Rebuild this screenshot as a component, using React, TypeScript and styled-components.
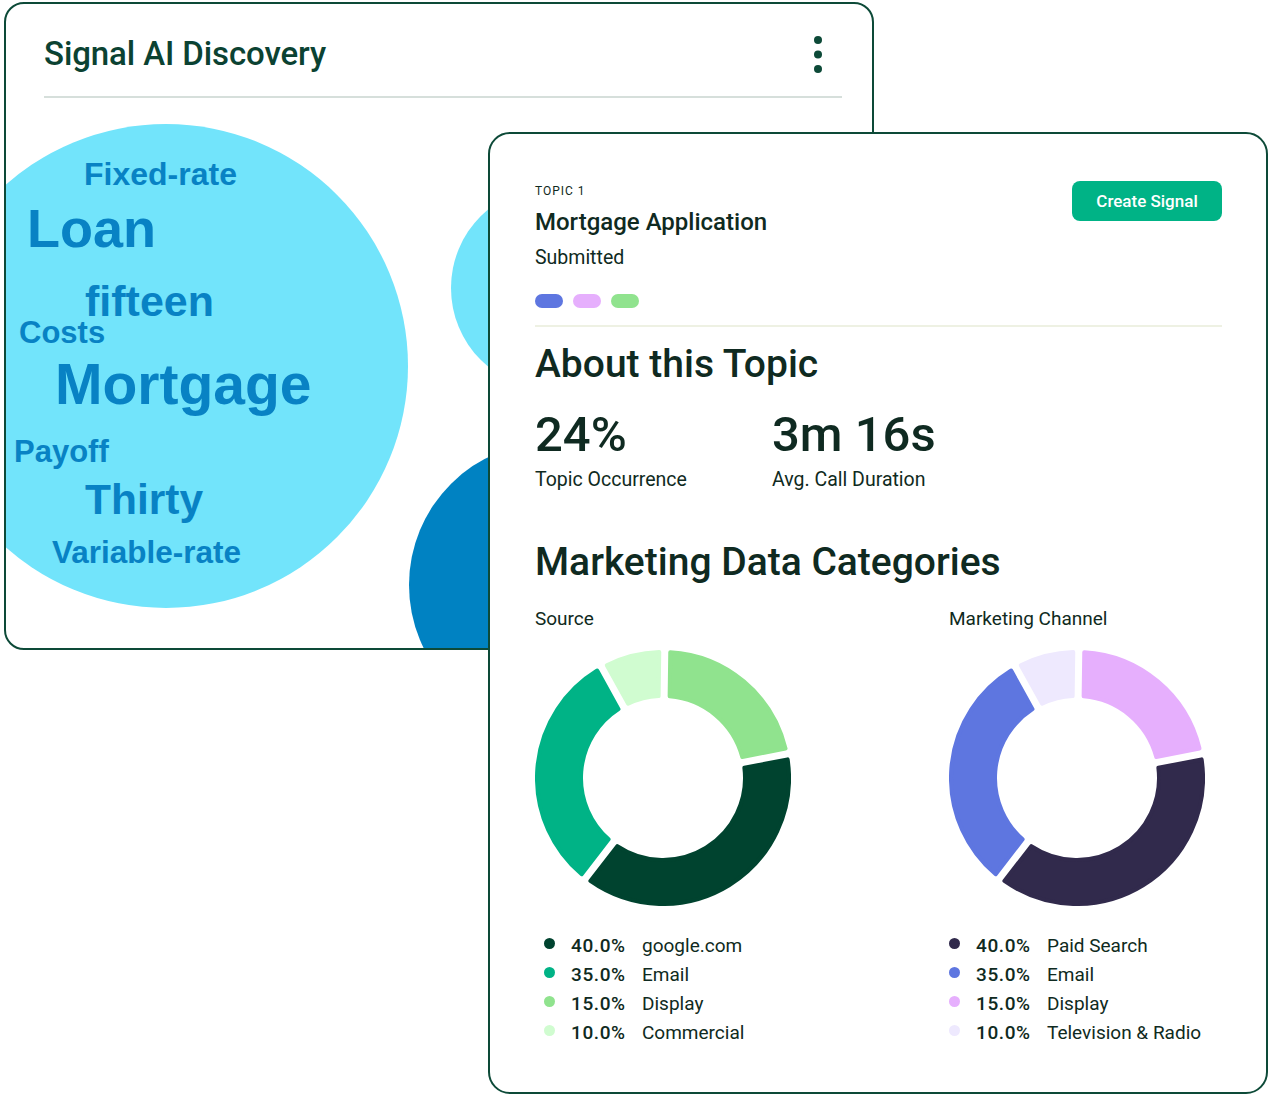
import React from 'react'
import styled, {createGlobalStyle} from 'styled-components'

const INK = '#0f2a21'
const FOREST = '#0d4a38'
const WORD_BLUE = '#0882c4'

const GlobalStyle = createGlobalStyle`
    body {
        margin: 0;
        background: #fff;
    }
`

const Stage = styled.div`
    display: grid;
    width: 1270px;
    font-family: Roboto, "Liberation Sans", sans-serif;
    color: ${INK};
`

/* ---------- discovery card (back) ---------- */

const DiscoveryCard = styled.section`
    grid-area: 1 / 1;
    align-self: start;
    justify-self: start;
    position: relative;
    z-index: 0;
    margin: 2px 0 0 4px;
    width: 870px;
    height: 648px;
    box-sizing: border-box;
    border: 2px solid ${FOREST};
    border-radius: 20px;
    background: #fff;
    overflow: hidden;
    display: flex;
    flex-direction: column;
`
const DiscoveryHeader = styled.header`
    display: flex;
    align-items: center;
    justify-content: space-between;
    margin: 0 30px 0 38px;
    padding: 30px 20px 22px 0;
    border-bottom: 2px solid #d6dfdb;
`
const DiscoveryTitle = styled.h2`
    margin: 0;
    font-size: 33px;
    line-height: 40px;
    font-weight: 500;
    letter-spacing: -0.1px;
    color: #0b4232;
`
const MenuButton = styled.button`
    display: flex;
    padding: 0;
    border: 0;
    background: none;
    color: ${FOREST};
    cursor: pointer;
`
const Cloud = styled.div`
    position: relative;
    flex: 1;
`
const Bubble = styled.div<{ $x: number; $y: number; $size: number; $dark?: boolean }>`
    position: absolute;
    left: ${p => p.$x}px;
    top: ${p => p.$y}px;
    width: ${p => p.$size}px;
    height: ${p => p.$size}px;
    border-radius: 50%;
    background: ${p => (p.$dark ? '#0082c2' : '#72e4fb')};
`
const Word = styled.span<{ $x: number; $y: number; $size: number }>`
    position: absolute;
    left: ${p => p.$x}px;
    top: ${p => p.$y}px;
    font-family: "Liberation Sans", Arial, sans-serif;
    font-size: ${p => p.$size}px;
    font-weight: 700;
    line-height: 1;
    white-space: nowrap;
    color: ${WORD_BLUE};
`

/* ---------- topic card (front) ---------- */

const TopicCard = styled.section`
    grid-area: 1 / 1;
    align-self: start;
    justify-self: start;
    position: relative;
    z-index: 1;
    margin: 132px 0 0 488px;
    width: 780px;
    height: 962px;
    box-sizing: border-box;
    border: 2px solid ${FOREST};
    border-radius: 22px;
    background: #fff;
    padding: 47px 44px 0 45px;
`
const TopicHead = styled.div`
    display: flex;
    justify-content: space-between;
    align-items: flex-start;
`
const Eyebrow = styled.div`
    font-size: 12px;
    line-height: 20px;
    letter-spacing: 1px;
    text-transform: uppercase;
`
const TopicName = styled.h1`
    margin: 6px 0 0;
    font-size: 24px;
    line-height: 30px;
    font-weight: 500;
`
const Status = styled.div`
    margin-top: 8px;
    font-size: 19.5px;
    line-height: 26px;
`
const Swatches = styled.div`
    display: flex;
    gap: 10px;
    margin-top: 23px;
`
const Swatch = styled.span<{ $color: string }>`
    width: 28px;
    height: 14px;
    border-radius: 7px;
    background: ${p => p.$color};
`
const CreateButton = styled.button`
    width: 150px;
    height: 40px;
    border: 0;
    border-radius: 8px;
    background: #00b386;
    color: #fff;
    font-family: inherit;
    font-size: 17px;
    font-weight: 500;
    cursor: pointer;
`
const Rule = styled.hr`
    margin: 17px 0 0;
    height: 2px;
    border: 0;
    background: #eef1e3;
`
const SectionTitle = styled.h2<{ $gap: number }>`
    margin: ${p => p.$gap}px 0 0;
    font-size: 39px;
    line-height: 46px;
    font-weight: 500;
`
const Stats = styled.div`
    display: grid;
    grid-template-columns: 237px auto;
    margin-top: 19px;
`
const StatValue = styled.div`
    font-size: 49px;
    line-height: 58px;
    font-weight: 500;
`
const StatLabel = styled.div`
    margin-top: 3px;
    font-size: 19.5px;
    line-height: 26px;
`
const Charts = styled.div`
    display: grid;
    grid-template-columns: 414px 1fr;
    margin-top: 21px;
`
const ChartLabel = styled.div`
    font-size: 19px;
    line-height: 26px;
`
const Ring = styled.svg`
    display: block;
    margin-top: 18px;
`
const Legend = styled.ul<{ $inset: number }>`
    list-style: none;
    margin: 25px 0 0;
    padding: 0 0 0 ${p => p.$inset}px;
`
const LegendRow = styled.li`
    display: grid;
    grid-template-columns: 27px 71px auto;
    align-items: center;
    height: 29px;
    font-size: 19px;
    line-height: 29px;
`
const LegendDot = styled.span<{ $color: string }>`
    width: 11px;
    height: 11px;
    margin-bottom: 4px;
    border-radius: 50%;
    background: ${p => p.$color};
`
const LegendShare = styled.span`
    font-weight: 500;
    letter-spacing: 0.6px;
`

// ring geometry (256px box)
const C = 128
const OUTER = 128
const INNER = 80
const GAP = 7
const JOIN = 4

const polar = (r: number, deg: number) => {
    const a = (deg * Math.PI) / 180
    return `${(C + r * Math.sin(a)).toFixed(2)} ${(C - r * Math.cos(a)).toFixed(2)}`
}

const slicePath = (from: number, to: number) => {
    const ro = OUTER - JOIN / 2
    const ri = INNER + JOIN / 2
    const half = (GAP + JOIN) / 2
    const trimO = (Math.asin(half / ro) * 180) / Math.PI
    const trimI = (Math.asin(half / ri) * 180) / Math.PI
    const large = to - from - 2 * trimO > 180 ? 1 : 0
    return [
        `M ${polar(ro, from + trimO)}`,
        `A ${ro} ${ro} 0 ${large} 1 ${polar(ro, to - trimO)}`,
        `L ${polar(ri, to - trimI)}`,
        `A ${ri} ${ri} 0 ${large} 0 ${polar(ri, from + trimI)}`,
        'Z'
    ].join(' ')
}

interface Slice {
    share: string
    label: string
    color: string
    from: number
    to: number
}

// angles are clockwise from 12 o'clock
const sourceSlices: Slice[] = [
    {share: '40.0%', label: 'google.com', color: '#00432f', from: 79, to: 217.7},
    {share: '35.0%', label: 'Email', color: '#00b386', from: 217.7, to: 331},
    {share: '15.0%', label: 'Display', color: '#90e38e', from: 0.8, to: 79},
    {share: '10.0%', label: 'Commercial', color: '#d0fcd0', from: 331, to: 360.8}
]

const channelSlices: Slice[] = [
    {share: '40.0%', label: 'Paid Search', color: '#312a4c', from: 79, to: 217.7},
    {share: '35.0%', label: 'Email', color: '#5e76e0', from: 217.7, to: 331},
    {share: '15.0%', label: 'Display', color: '#e6affd', from: 0.8, to: 79},
    {share: '10.0%', label: 'Television & Radio', color: '#eee9fe', from: 331, to: 360.8}
]

const cloudWords = [
    {text: 'Fixed-rate', x: 78, y: 60, size: 32},
    {text: 'Loan', x: 21, y: 103, size: 54},
    {text: 'fifteen', x: 79, y: 182, size: 43},
    {text: 'Costs', x: 13, y: 219, size: 31},
    {text: 'Mortgage', x: 49, y: 258, size: 57},
    {text: 'Payoff', x: 8, y: 338, size: 31},
    {text: 'Thirty', x: 79, y: 381, size: 42.5},
    {text: 'Variable-rate', x: 46, y: 439, size: 31.5}
]

const Donut = ({title, slices, inset}: { title: string; slices: Slice[]; inset: number }) => (
    <div>
        <ChartLabel>{title}</ChartLabel>
        <Ring width={256} height={256} viewBox="0 0 256 256">
            {slices.map(s => (
                <path
                    key={s.label}
                    d={slicePath(s.from, s.to)}
                    fill={s.color}
                    stroke={s.color}
                    strokeWidth={JOIN}
                    strokeLinejoin="round"
                />
            ))}
        </Ring>
        <Legend $inset={inset}>
            {slices.map(s => (
                <LegendRow key={s.label}>
                    <LegendDot $color={s.color}/>
                    <LegendShare>{s.share}</LegendShare>
                    <span>{s.label}</span>
                </LegendRow>
            ))}
        </Legend>
    </div>
)

const KebabIcon = () => (
    <svg width="8" height="37" viewBox="0 0 8 37" fill="currentColor">
        <circle cx="4" cy="4" r="4"/>
        <circle cx="4" cy="18.5" r="4"/>
        <circle cx="4" cy="33" r="4"/>
    </svg>
)

export default function App() {
    return (
        <Stage>
            <GlobalStyle/>
            <DiscoveryCard>
                <DiscoveryHeader>
                    <DiscoveryTitle>Signal AI Discovery</DiscoveryTitle>
                    <MenuButton aria-label="More">
                        <KebabIcon/>
                    </MenuButton>
                </DiscoveryHeader>
                <Cloud>
                    <Bubble $x={-82} $y={26} $size={484}/>
                    <Bubble $x={445} $y={88} $size={204}/>
                    <Bubble $x={403} $y={344} $size={286} $dark/>
                    {cloudWords.map(w => (
                        <Word key={w.text} $x={w.x} $y={w.y} $size={w.size}>{w.text}</Word>
                    ))}
                </Cloud>
            </DiscoveryCard>

            <TopicCard>
                <TopicHead>
                    <div>
                        <Eyebrow>Topic 1</Eyebrow>
                        <TopicName>Mortgage Application</TopicName>
                        <Status>Submitted</Status>
                        <Swatches>
                            <Swatch $color="#5e76e0"/>
                            <Swatch $color="#e6affd"/>
                            <Swatch $color="#90e38e"/>
                        </Swatches>
                    </div>
                    <CreateButton>Create Signal</CreateButton>
                </TopicHead>
                <Rule/>
                <SectionTitle $gap={14}>About this Topic</SectionTitle>
                <Stats>
                    <div>
                        <StatValue>24%</StatValue>
                        <StatLabel>Topic Occurrence</StatLabel>
                    </div>
                    <div>
                        <StatValue>3m 16s</StatValue>
                        <StatLabel>Avg. Call Duration</StatLabel>
                    </div>
                </Stats>
                <SectionTitle $gap={46}>Marketing Data Categories</SectionTitle>
                <Charts>
                    <Donut title="Source" slices={sourceSlices} inset={9}/>
                    <Donut title="Marketing Channel" slices={channelSlices} inset={0}/>
                </Charts>
            </TopicCard>
        </Stage>
    )
}
